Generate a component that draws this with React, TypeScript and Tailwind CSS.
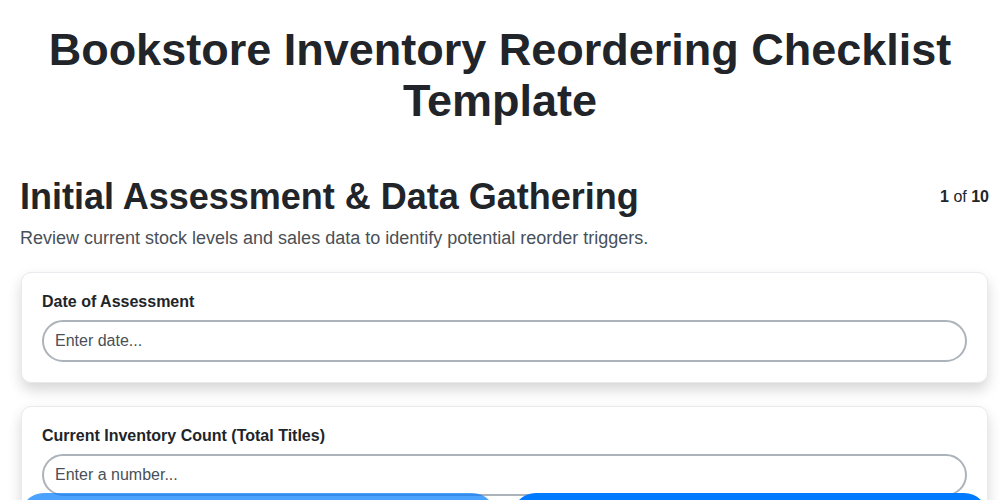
import React, { useState } from 'react';

const fields = [
  { id: 'date', label: 'Date of Assessment', placeholder: 'Enter date...' },
  { id: 'count', label: 'Current Inventory Count (Total Titles)', placeholder: 'Enter a number...' },
];

export default function App() {
  const [values, setValues] = useState<Record<string, string>>({});

  return (
    <div className="min-h-screen bg-white text-[#212529] font-['Liberation_Sans',Arial,sans-serif]">
      <h1 className="pt-[24px] px-5 text-center text-[45px] leading-[51px] font-bold">
        Bookstore Inventory Reordering Checklist Template
      </h1>

      <div className="mt-[49px] pl-5 pr-[11px]">
        {/* 단계 헤더 */}
        <div className="flex items-center justify-between">
          <h2 className="text-[36px] leading-[43px] font-bold">Initial Assessment &amp; Data Gathering</h2>
          <span className="text-base">
            <b>1</b> of <b>10</b>
          </span>
        </div>
        <p className="mt-[7px] text-lg leading-[27px] text-[#495057]">
          Review current stock levels and sales data to identify potential reorder triggers.
        </p>

        {/* 입력 카드 */}
        <div className="mt-[20px] ml-[1px] mr-[1px] flex flex-col gap-[23px] pb-24">
          {fields.map((f) => (
            <div
              key={f.id}
              className="rounded-[10px] border border-[#e9eaee] bg-white px-5 pt-[17px] pb-5 shadow-[0_7px_14px_rgba(0,0,0,0.16)]"
            >
              <label htmlFor={f.id} className="block mb-[6px] text-base leading-6 font-bold">
                {f.label}
              </label>
              <input
                id={f.id}
                type="text"
                value={values[f.id] ?? ''}
                onChange={(e) => setValues({ ...values, [f.id]: e.target.value })}
                placeholder={f.placeholder}
                className="block w-full h-[42px] rounded-full border-2 border-[#adb3ba] bg-white px-[11px] text-base text-[#212529] placeholder:text-[#495057] outline-none"
              />
            </div>
          ))}
        </div>
      </div>

      {/* 이전 / 다음 버튼 */}
      <div className="fixed inset-x-0 top-[493px] flex gap-4 pl-5 pr-[12px]">
        <button className="flex-1 h-12 rounded-full bg-[#007bff] opacity-70 text-white font-bold">
          Previous
        </button>
        <button className="flex-1 h-12 rounded-full bg-[#007bff] text-white font-bold">Next</button>
      </div>
    </div>
  );
}
